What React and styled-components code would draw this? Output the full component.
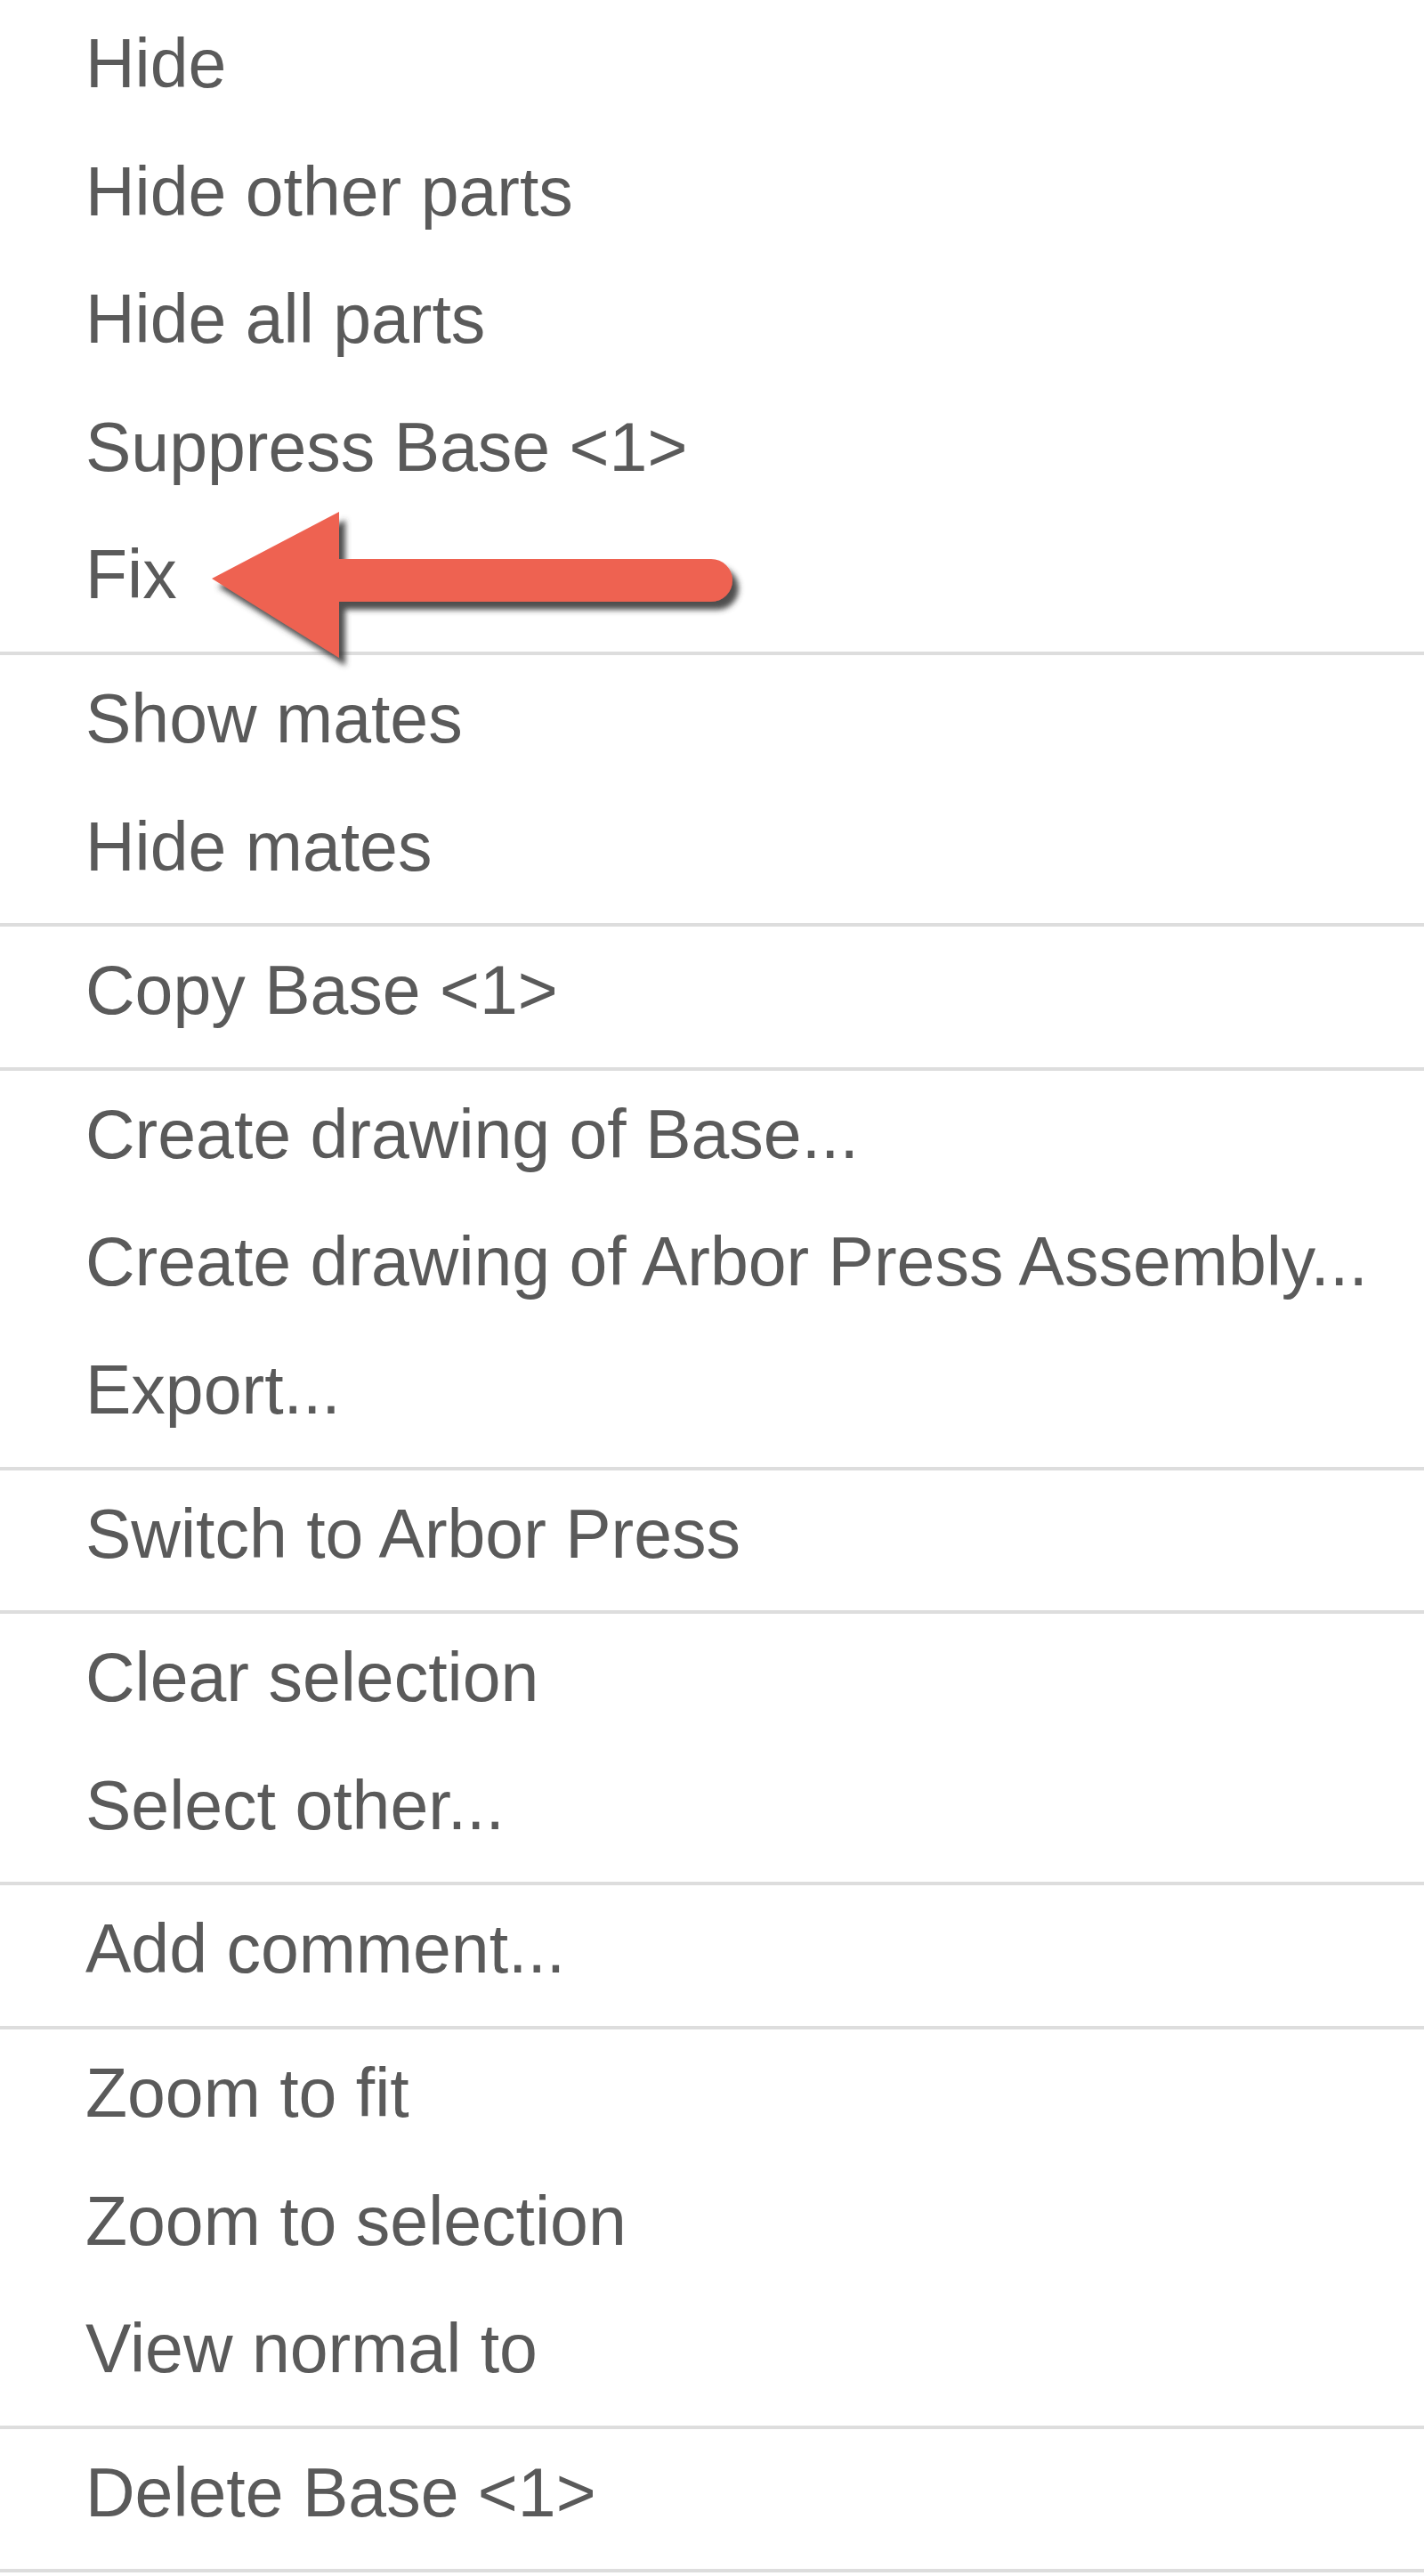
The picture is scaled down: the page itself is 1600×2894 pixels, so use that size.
import styled, { createGlobalStyle } from "styled-components"

const GlobalStyle = createGlobalStyle`
    body {
        margin: 0;
        background: #ffffff;
    }
`

const groups = [
    ["Hide", "Hide other parts", "Hide all parts", "Suppress Base <1>", "Fix"],
    ["Show mates", "Hide mates"],
    ["Copy Base <1>"],
    ["Create drawing of Base...", "Create drawing of Arbor Press Assembly...", "Export..."],
    ["Switch to Arbor Press"],
    ["Clear selection", "Select other..."],
    ["Add comment..."],
    ["Zoom to fit", "Zoom to selection", "View normal to"],
    ["Delete Base <1>"],
]

export default function App() {
    return (
        <>
            <GlobalStyle />
            <Menu>
                {groups.map((items, i) => (
                    <Group key={i}>
                        {items.map((label) => (
                            <Item key={label}>{label}</Item>
                        ))}
                    </Group>
                ))}

                <Arrow viewBox="0 0 660 220" width="660" height="220">
                    <defs>
                        <filter id="shadow" x="-10%" y="-20%" width="130%" height="150%">
                            <feDropShadow dx="7" dy="9" stdDeviation="3" floodColor="#3a3a3a" floodOpacity="0.9" />
                        </filter>
                    </defs>
                    <path
                        d="M18 93 L161 18 L161 71 L579 71 A24 24 0 0 1 579 119 L161 119 L161 182 Z"
                        fill="#EE6251"
                        filter="url(#shadow)"
                    />
                </Arrow>
            </Menu>
        </>
    )
}

const Menu = styled.div`
    position: relative;
    width: 1600px;
    display: flex;
    flex-direction: column;
    font-family: "Liberation Sans", Arial, sans-serif;
    font-size: 77px;
    color: #5a5a5a;
    background: #ffffff;
`
const Group = styled.div`
    display: flex;
    flex-direction: column;
    padding-bottom: 14px;
    border-bottom: 4px solid #dddddd;
`
const Item = styled.div`
    height: 143.6px;
    line-height: 143.6px;
    padding-left: 96px;
    white-space: nowrap;
`
const Arrow = styled.svg`
    position: absolute;
    left: 220px;
    top: 557px;
    overflow: visible;
`
